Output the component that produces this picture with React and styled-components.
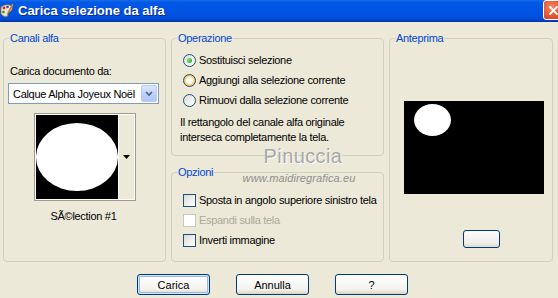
import styled, { createGlobalStyle } from "styled-components";

const GlobalStyle = createGlobalStyle`
  html, body {
    margin: 0;
    padding: 0;
    background: #ece9d8;
  }
  body {
    font-family: "Liberation Sans", Arial, sans-serif;
  }
`;

const StyledWindow = styled.div`
  position: relative;
  width: 558px;
  height: 298px;
  background: #ece9d8;
  display: flex;
  flex-direction: column;
  overflow: hidden;
  font-family: "Liberation Sans", Arial, sans-serif;
  font-size: 11px;
  letter-spacing: -0.3px;
  color: #000;
`;

const StyledTitleBar = styled.div`
  height: 22px;
  flex: none;
  display: flex;
  align-items: center;
  gap: 4px;
  background: linear-gradient(#1a6ce8 0%, #0058e6 12%, #0054e3 50%, #0050dc 85%, #003fc0 100%);
  border-bottom: 1px solid #0038a8;
  box-sizing: border-box;
  overflow: hidden;
`;

const StyledTitle = styled.div`
  flex: 1;
  color: #fff;
  font-size: 13px;
  font-weight: bold;
  letter-spacing: 0;
  text-shadow: 1px 1px 0 #0a2a8c;
  white-space: nowrap;
`;

const StyledClose = styled.div`
  width: 21px;
  height: 20px;
  margin-right: -6px;
  align-self: flex-start;
  box-sizing: border-box;
  border: 1px solid #fff;
  border-radius: 3px;
  background: radial-gradient(circle at 40% 35%, #f08a6a, #e0532c 60%, #c8401c);
  display: flex;
  align-items: center;
  justify-content: center;
`;

const StyledBody = styled.div`
  flex: 1;
  display: flex;
  flex-direction: column;
  padding: 10px 0 0 3px;
`;

const StyledGroups = styled.div`
  display: grid;
  grid-template-columns: 163px 213px 164px;
  column-gap: 5px;
  height: 230px;
`;

const StyledColumn = styled.div`
  display: flex;
  flex-direction: column;
  gap: 10px;
`;

const StyledGroup = styled.fieldset`
  margin: 0;
  padding: 0;
  min-width: 0;
  border: 1px solid #d0d0bf;
  border-radius: 4px;
  display: flex;
  flex-direction: column;
  box-sizing: border-box;
  flex: ${({ $fixed }) => ($fixed ? `0 0 ${$fixed}px` : "1")};
`;

const StyledLegend = styled.legend`
  margin-left: 5px;
  padding: 0 1px;
  color: #0046d5;
  font-size: 11px;
  line-height: 12px;
`;

const StyledLabel = styled.div`
  margin: 21px 0 0 6px;
  line-height: 12px;
`;

const StyledSelect = styled.div`
  margin: 6px 0 0 4px;
  width: 151px;
  height: 21px;
  box-sizing: border-box;
  border: 1px solid #7f9db9;
  background: #fff;
  display: flex;
  align-items: center;
  padding-left: 4px;
`;

const StyledSelectText = styled.span`
  flex: 1;
  white-space: nowrap;
`;

const StyledSelectArrow = styled.div`
  width: 16px;
  height: 17px;
  margin-right: 1px;
  box-sizing: border-box;
  border: 1px solid #b9cbf3;
  border-radius: 2px;
  background: linear-gradient(#dce6fd, #bccff9 60%, #b1c6f6);
  display: flex;
  align-items: center;
  justify-content: center;
`;

const StyledThumb = styled.div`
  margin: 9px 0 0 30px;
  width: 102px;
  height: 88px;
  box-sizing: border-box;
  border: 1px solid #9d9b8e;
  display: flex;
  background: #fff;
  padding: 1px;
`;

const StyledThumbImage = styled.div`
  flex: 1;
  background: #000;
  display: flex;
  align-items: center;
  justify-content: center;
`;

const StyledEllipse = styled.div`
  width: ${({ $w }) => $w}px;
  height: ${({ $h }) => $h}px;
  border-radius: 50%;
  background: #fff;
`;

const StyledThumbDrop = styled.div`
  width: 16px;
  background: #ece9d8;
  border-left: 1px solid #fff;
  display: flex;
  align-items: center;
  justify-content: center;
`;

const StyledCaption = styled.div`
  margin-top: 9px;
  text-align: center;
  padding-right: 2px;
  line-height: 12px;
`;

const StyledOptions = styled.div`
  display: flex;
  flex-direction: column;
  margin: ${({ $top }) => $top}px 0 0 11px;
`;

const StyledOption = styled.div`
  height: 20px;
  display: flex;
  align-items: center;
  gap: 3px;
  white-space: nowrap;
  color: ${({ $disabled }) => ($disabled ? "#aca899" : "#000")};
`;

const StyledRadio = styled.span`
  width: 13px;
  height: 13px;
  box-sizing: border-box;
  border-radius: 50%;
  border: 1px solid #1c5180;
  background: ${({ $hover }) =>
    $hover
      ? "radial-gradient(circle, #fff 0 3px, #fdd889 4px, #f5b936 6px)"
      : "linear-gradient(135deg, #dcdcd7, #fff)"};
  display: flex;
  align-items: center;
  justify-content: center;
`;

const StyledDot = styled.span`
  width: 5px;
  height: 5px;
  border-radius: 50%;
  background: radial-gradient(circle at 35% 35%, #7be37b, #21a121);
`;

const StyledCheck = styled.span`
  width: 13px;
  height: 13px;
  box-sizing: border-box;
  border: 1px solid ${({ $disabled }) => ($disabled ? "#cac8bb" : "#1c5180")};
  background: ${({ $disabled }) =>
    $disabled ? "#fff" : "linear-gradient(135deg, #dcdcd7, #fff)"};
`;

const StyledNote = styled.div`
  margin: 5px 0 0 8px;
  line-height: 15px;
`;

const StyledPreview = styled.div`
  margin: 57px 0 0 14px;
  width: 140px;
  height: 93px;
  background: #000;
  padding: 3px 0 0 10px;
  box-sizing: border-box;
`;

const StyledSmallButton = styled.div`
  margin: 36px 0 0 73px;
  width: 37px;
  height: 18px;
  box-sizing: border-box;
  border: 1px solid #003c74;
  border-radius: 3px;
  background: linear-gradient(#fdfdfb, #f0efea 70%, #dedbd0);
`;

const StyledButtonRow = styled.div`
  margin-top: 12px;
  display: flex;
  gap: 26px;
  padding-left: 134px;
`;

const StyledButton = styled.div`
  width: 73px;
  height: 21px;
  box-sizing: border-box;
  border: 1px solid #003c74;
  border-radius: 3px;
  background: linear-gradient(#ffffff, #f4f3ee 75%, #d8d4c8);
  box-shadow: ${({ $default }) =>
    $default ? "inset 0 0 0 1px #cee7ff, inset 0 0 0 2px #98b8ea" : "none"};
  display: flex;
  align-items: center;
  justify-content: center;
  letter-spacing: 0;
`;

const StyledWatermark = styled.div`
  position: absolute;
  left: 238px;
  top: 144px;
  width: 122px;
  display: flex;
  flex-direction: column;
  align-items: center;
  pointer-events: none;
`;

const StyledMarkName = styled.div`
  font-size: 20px;
  line-height: 24px;
  letter-spacing: 0.4px;
  color: #a8a8a8;
  text-shadow: 1px 1px 0 #fff;
  padding-left: 8px;
`;

const StyledMarkUrl = styled.div`
  font-size: 11px;
  font-style: italic;
  letter-spacing: 0.1px;
  color: #8e8e8e;
  margin-top: 4px;
`;

const AppIcon = () => (
  <svg width="14" height="16" viewBox="0 0 14 16">
    <path d="M1 4 Q6 0 12 3 Q13 8 9 9 Q7 10 8 13 Q4 15 1 11 Z" fill="#f2e6c8" stroke="#8a6a3a" strokeWidth="0.8" />
    <circle cx="4" cy="5" r="1.4" fill="#e02020" />
    <circle cx="7.5" cy="4" r="1.3" fill="#2050e0" />
    <circle cx="3.5" cy="9" r="1.3" fill="#20a020" />
    <path d="M13 1 L8 10" stroke="#c08040" strokeWidth="1.6" />
  </svg>
);

const CloseIcon = () => (
  <svg width="11" height="11" viewBox="0 0 11 11">
    <path d="M1.5 1.5 L9.5 9.5 M9.5 1.5 L1.5 9.5" stroke="#fff" strokeWidth="1.8" />
  </svg>
);

const Chevron = () => (
  <svg width="8" height="6" viewBox="0 0 8 6">
    <path d="M1 1 L4 4 L7 1" fill="none" stroke="#4d6185" strokeWidth="1.6" />
  </svg>
);

const Triangle = () => (
  <svg width="7" height="4" viewBox="0 0 7 4">
    <path d="M0 0 H7 L3.5 4 Z" fill="#000" />
  </svg>
);

const App = () => (
  <>
    <GlobalStyle />
    <StyledWindow>
      <StyledTitleBar>
        <AppIcon />
        <StyledTitle>Carica selezione da alfa</StyledTitle>
        <StyledClose>
          <CloseIcon />
        </StyledClose>
      </StyledTitleBar>
      <StyledBody>
        <StyledGroups>
          <StyledGroup>
            <StyledLegend>Canali alfa</StyledLegend>
            <StyledLabel>Carica documento da:</StyledLabel>
            <StyledSelect>
              <StyledSelectText>Calque Alpha Joyeux Noël</StyledSelectText>
              <StyledSelectArrow>
                <Chevron />
              </StyledSelectArrow>
            </StyledSelect>
            <StyledThumb>
              <StyledThumbImage>
                <StyledEllipse $w={82} $h={68} />
              </StyledThumbImage>
              <StyledThumbDrop>
                <Triangle />
              </StyledThumbDrop>
            </StyledThumb>
            <StyledCaption>SÃ©lection #1</StyledCaption>
          </StyledGroup>

          <StyledColumn>
            <StyledGroup $fixed={124}>
              <StyledLegend>Operazione</StyledLegend>
              <StyledOptions $top={6}>
                <StyledOption>
                  <StyledRadio>
                    <StyledDot />
                  </StyledRadio>
                  Sostituisci selezione
                </StyledOption>
                <StyledOption>
                  <StyledRadio $hover />
                  Aggiungi alla selezione corrente
                </StyledOption>
                <StyledOption>
                  <StyledRadio />
                  Rimuovi dalla selezione corrente
                </StyledOption>
              </StyledOptions>
              <StyledNote>
                Il rettangolo del canale alfa originale
                <br />
                interseca completamente la tela.
              </StyledNote>
            </StyledGroup>
            <StyledGroup>
              <StyledLegend>Opzioni</StyledLegend>
              <StyledOptions $top={12}>
                <StyledOption>
                  <StyledCheck />
                  Sposta in angolo superiore sinistro tela
                </StyledOption>
                <StyledOption $disabled>
                  <StyledCheck $disabled />
                  Espandi sulla tela
                </StyledOption>
                <StyledOption>
                  <StyledCheck />
                  Inverti immagine
                </StyledOption>
              </StyledOptions>
            </StyledGroup>
          </StyledColumn>

          <StyledGroup>
            <StyledLegend>Anteprima</StyledLegend>
            <StyledPreview>
              <StyledEllipse $w={37} $h={32} />
            </StyledPreview>
            <StyledSmallButton />
          </StyledGroup>
        </StyledGroups>

        <StyledButtonRow>
          <StyledButton $default>Carica</StyledButton>
          <StyledButton>Annulla</StyledButton>
          <StyledButton>?</StyledButton>
        </StyledButtonRow>
      </StyledBody>

      <StyledWatermark>
        <StyledMarkName>Pinuccia</StyledMarkName>
        <StyledMarkUrl>www.maidiregrafica.eu</StyledMarkUrl>
      </StyledWatermark>
    </StyledWindow>
  </>
);

export default App;
